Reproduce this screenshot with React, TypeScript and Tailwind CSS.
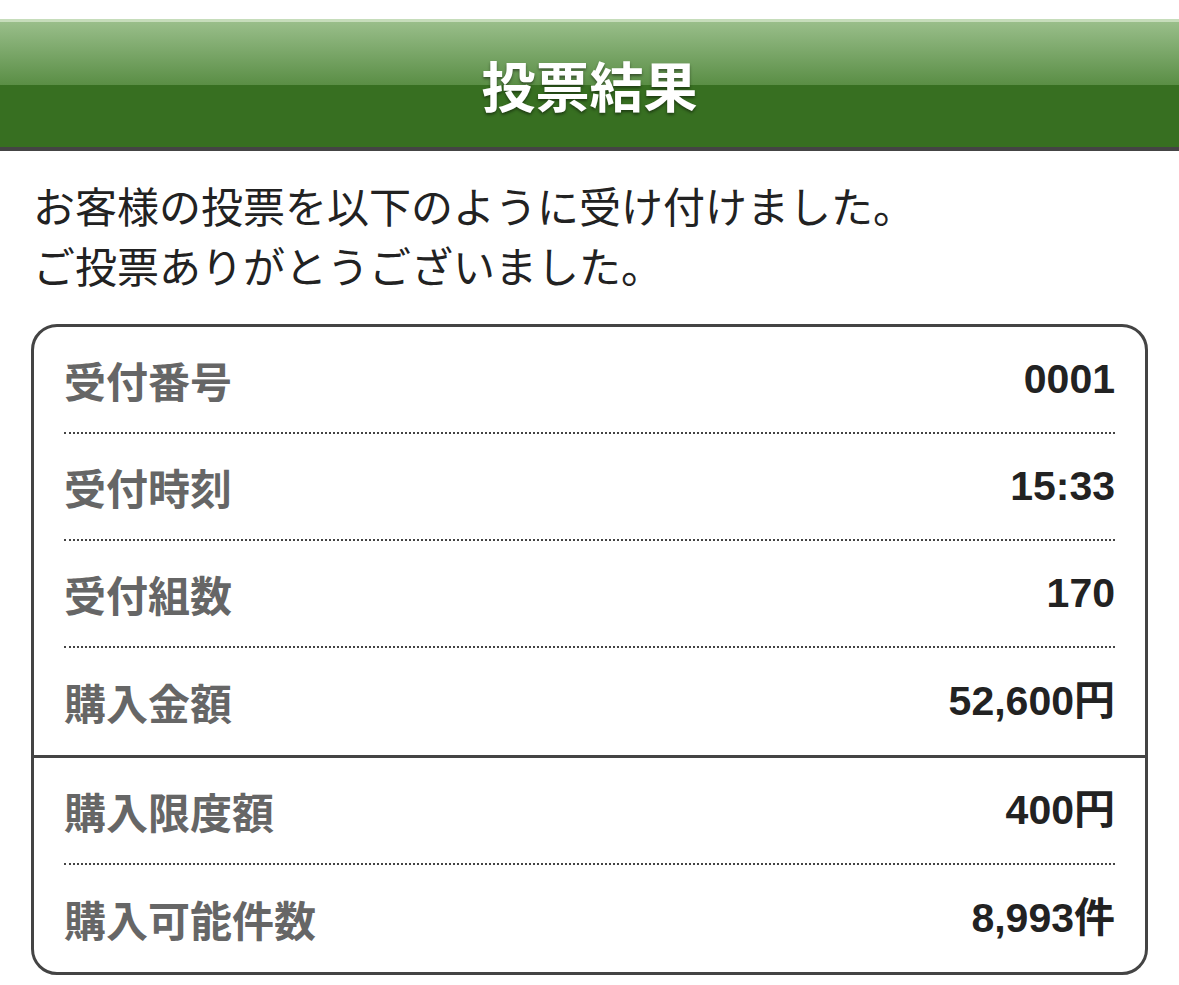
const rowsTop = [
  { label: "受付番号", value: "0001" },
  { label: "受付時刻", value: "15:33" },
  { label: "受付組数", value: "170" },
  { label: "購入金額", value: "52,600円" },
];

const rowsBottom = [
  { label: "購入限度額", value: "400円" },
  { label: "購入可能件数", value: "8,993件" },
];

const Row = ({ label, value, last }: { label: string; value: string; last?: boolean }) => (
  <div className="px-[30px]">
    <div
      className={`flex h-[107px] items-center justify-between ${
        last ? "" : "border-b-2 border-dotted border-[#444]"
      }`}
    >
      <span className="text-[42px] font-bold text-[#666]">{label}</span>
      <span className="text-[41px] font-bold text-[#222] [font-family:'Liberation_Sans','Noto_Sans_CJK_JP',sans-serif]">
        {value}
      </span>
    </div>
  </div>
);

export default function App() {
  return (
    <div className="min-h-[985px] bg-white [font-family:'Noto_Sans_CJK_JP',sans-serif]">
      <div className="pt-[19px]">
        <div className="h-[3px] bg-[#c6ddbb]" />
        <div className="relative border-b-4 border-[#444]">
          <div className="h-[63px] bg-gradient-to-b from-[#99be8a] to-[#5a8e45]" />
          <div className="h-[62px] bg-[#376f21]" />
          <div className="absolute inset-0 flex items-center justify-center">
            <h1 className="text-[54px] font-bold leading-none text-white [text-shadow:0_2px_3px_rgba(0,0,0,0.45)]">
              投票結果
            </h1>
          </div>
        </div>
      </div>

      <p className="mt-[24px] pl-[33px] text-[42px] leading-[60px] text-[#222]">
        お客様の投票を以下のように受け付けました。
        <br />
        ご投票ありがとうございました。
      </p>

      <div className="ml-[31px] mt-[29px] w-[1117px] rounded-[26px] border-[3px] border-[#444]">
        {rowsTop.map((r, i) => (
          <Row key={r.label} label={r.label} value={r.value} last={i === rowsTop.length - 1} />
        ))}
        <div className="h-[3px] bg-[#444]" />
        {rowsBottom.map((r, i) => (
          <Row key={r.label} label={r.label} value={r.value} last={i === rowsBottom.length - 1} />
        ))}
      </div>
    </div>
  );
}
